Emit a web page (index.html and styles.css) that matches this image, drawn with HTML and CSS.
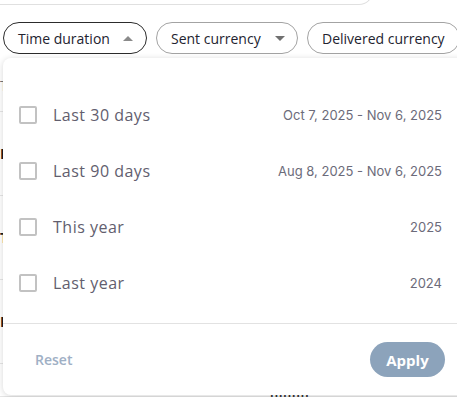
FILE: index.html
```html
<!DOCTYPE html>
<html>
<head>
<meta charset="utf-8">
<link rel="stylesheet" href="styles.css">
</head>
<body>
<div class="page">
  <div class="top-card"></div>
  <div class="filters">
    <button class="chip chip-active">Time duration <span class="tri tri-up"></span></button>
    <button class="chip">Sent currency <span class="tri tri-down"></span></button>
    <button class="chip">Delivered currency</button>
  </div>
  <div class="bg-list">
    <div class="bg-head">Transaction</div>
    <div class="bg-row">Payment</div>
    <div class="bg-row">Transfer</div>
    <div class="bg-row">Payment</div>
    <div class="bg-row bg-last"><span class="bg-frag">Ilililili</span></div>
  </div>

  <div class="dropdown">
    <ul class="options">
      <li class="option"><span class="box"></span><span class="label">Last 30 days</span><span class="range">Oct 7, 2025 - Nov 6, 2025</span></li>
      <li class="option"><span class="box"></span><span class="label">Last 90 days</span><span class="range">Aug 8, 2025 - Nov 6, 2025</span></li>
      <li class="option"><span class="box"></span><span class="label">This year</span><span class="range">2025</span></li>
      <li class="option"><span class="box"></span><span class="label">Last year</span><span class="range">2024</span></li>
    </ul>
    <div class="footer">
      <button class="reset">Reset</button>
      <button class="apply">Apply</button>
    </div>
  </div>
</div>
</body>
</html>
```
FILE: styles.css
```css
* { box-sizing: border-box; }
html, body { margin: 0; padding: 0; background: #fff; overflow: hidden; }
body { width: 457px; height: 397px; font-family: "Open Sans", "Liberation Sans", sans-serif; }
.page { position: relative; height: 397px; display: flow-root; }

.top-card {
  width: 373px;
  height: 22px;
  margin-top: -17px;
  border: 1px solid #e0e0e0;
  border-top: none;
  border-radius: 0 0 14px 0;
  border-left: none;
}

.filters {
  display: flex;
  gap: 9px;
  padding-left: 3px;
  margin-top: 17px;
  white-space: nowrap;
}
.chip {
  display: inline-flex;
  align-items: center;
  height: 32px;
  padding: 0 14px;
  border: 1px solid #a3a3a3;
  border-radius: 16px;
  background: #fff;
  font-family: inherit;
  font-size: 14px;
  color: #23232f;
  flex-shrink: 0;
}
.chip-active { border-color: #2c2c2c; width: 144px; }
.chip:nth-child(2) { width: 142px; }
.tri {
  width: 0; height: 0;
  margin-left: auto;
  border-left: 5px solid transparent;
  border-right: 5px solid transparent;
}
.tri-up { border-bottom: 5px solid #8a8a8a; margin-right: -1px; }
.tri-down { border-top: 5px solid #707070; margin-right: -2px; }

.bg-list { margin-top: 6px; }
.bg-head {
  height: 52px;
  border-bottom: 1px solid #e6e6e6;
  font-size: 14px;
  color: #777;
  padding-top: 16px;
}
.bg-row {
  height: 84px;
  border-bottom: 1px solid #e6e6e6;
  display: flex;
  align-items: center;
  font-size: 14px;
  font-weight: 700;
  color: #1b1b1b;
}
.bg-row.bg-last { height: 33px; align-items: flex-end; }
.bg-frag { margin-left: 270px; font-size: 11px; color: #333; line-height: 1; margin-bottom: -6px; letter-spacing: 1px; }

.dropdown {
  position: absolute;
  left: 3px;
  top: 58px;
  width: 470px;
  height: 337px;
  background: #fff;
  border-radius: 8px;
  box-shadow: 0 1px 6px rgba(0, 0, 0, 0.16);
  display: flex;
  flex-direction: column;
}
.options {
  list-style: none;
  margin: 0;
  padding: 29px 0 12px;
  border-bottom: 1px solid #e2e2e2;
}
.option {
  height: 56px;
  display: flex;
  align-items: center;
  padding: 0 31px 0 16px;
}
.box {
  width: 18px;
  height: 18px;
  border: 2px solid #c2c2c2;
  border-radius: 2px;
  flex-shrink: 0;
}
.label {
  margin-left: 16px;
  font-size: 16px;
  color: #625e6e;
  letter-spacing: 0.5px;
}
.range {
  margin-left: auto;
  font-family: Inter, "Open Sans", sans-serif;
  font-size: 13px;
  color: #6c6b7a;
}
.footer {
  display: flex;
  align-items: center;
  justify-content: space-between;
  padding: 18px 28px 0 32px;
}
.reset {
  border: none;
  background: none;
  padding: 0;
  font-family: inherit;
  font-size: 14px;
  font-weight: 600;
  color: #9fb0c5;
}
.apply {
  width: 75px;
  height: 35px;
  border: none;
  border-radius: 18px;
  background: #8ca3bb;
  color: #fff;
  font-family: inherit;
  font-size: 15px;
  font-weight: 700;
}
```
